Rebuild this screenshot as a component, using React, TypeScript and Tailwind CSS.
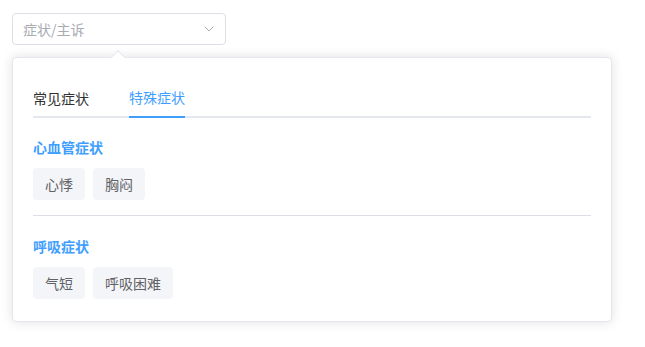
import React from 'react';

const groups = [
  { title: '心血管症状', items: ['心悸', '胸闷'] },
  { title: '呼吸症状', items: ['气短', '呼吸困难'] },
];

const App: React.FC = () => {
  return (
    <div
      className="w-[645px] h-[347px] bg-white pt-[13px] pl-[12px]"
      style={{ fontFamily: '"Noto Sans CJK SC", "Noto Sans", sans-serif' }}
    >
      <div className="w-[214px] h-[32px] border border-[#dcdfe6] rounded-[4px] flex items-center justify-between pl-[10px] pr-[10px]">
        <span className="text-[14px] text-[#a8abb2]">症状/主诉</span>
        <svg width="12" height="12" viewBox="0 0 12 12" fill="none" className="text-[#a8abb2]">
          <path d="M2 4l4 4 4-4" stroke="currentColor" strokeWidth="1" strokeLinecap="round" strokeLinejoin="round" />
        </svg>
      </div>

      <div className="relative mt-[12px] w-[600px] bg-white border border-[#e4e7ed] rounded-[4px] shadow-[0_0_12px_rgba(0,0,0,0.12)] px-[20px] pt-[20px] pb-[22px]">
        <div className="absolute -top-[6px] left-[100px] w-[10px] h-[10px] bg-white border-l border-t border-[#e4e7ed] rotate-45" />

        <div className="flex border-b-2 border-[#e4e7ed] h-[40px] text-[14px]">
          <div className="h-[40px] flex items-center text-[#303133]">常见症状</div>
          <div className="ml-[40px] h-[40px] flex items-center text-[#409eff] border-b-2 border-[#409eff] -mb-[2px]">
            特殊症状
          </div>
        </div>

        {groups.map((g, i) => (
          <div key={g.title} className={i > 0 ? 'border-t border-[#dcdfe6] mt-[15px] pt-[20px]' : 'pt-[19px]'}>
            <div className="text-[14px] leading-[20px] font-bold text-[#409eff]">{g.title}</div>
            <div className="flex gap-[8px] mt-[11px]">
              {g.items.map((t) => (
                <span
                  key={t}
                  className="h-[32px] px-[12px] flex items-center rounded-[4px] bg-[#f4f5f8] text-[14px] text-[#606266]"
                >
                  {t}
                </span>
              ))}
            </div>
          </div>
        ))}
      </div>
    </div>
  );
};

export default App;
